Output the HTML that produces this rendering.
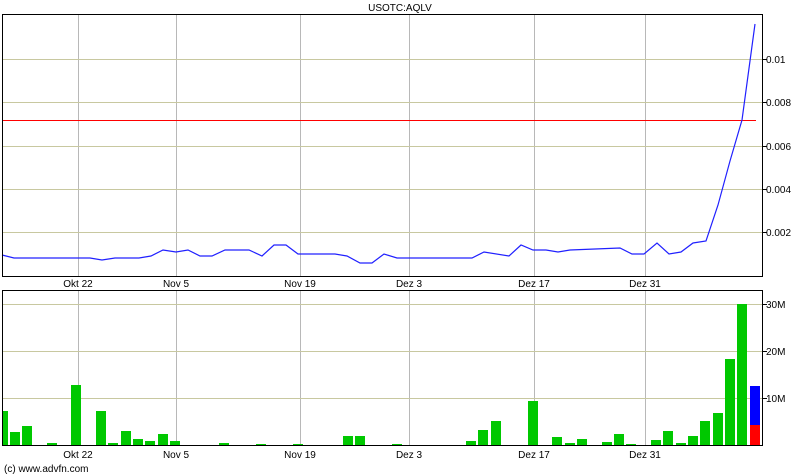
<!DOCTYPE html><html><head><style>body{margin:0;background:#fff}svg{display:block}text{font-family:"Liberation Sans",sans-serif;font-size:10px;fill:#000}</style></head><body>
<svg width="800" height="475" xmlns="http://www.w3.org/2000/svg">
<text x="400" y="11" text-anchor="middle">USOTC:AQLV</text>
<g stroke="#b8b8b8" stroke-width="1">
<line x1="78.5" y1="15" x2="78.5" y2="276"/><line x1="176.5" y1="15" x2="176.5" y2="276"/><line x1="300.5" y1="15" x2="300.5" y2="276"/><line x1="409.5" y1="15" x2="409.5" y2="276"/><line x1="534.5" y1="15" x2="534.5" y2="276"/><line x1="645.5" y1="15" x2="645.5" y2="276"/>
<line x1="78.5" y1="290" x2="78.5" y2="446"/><line x1="176.5" y1="290" x2="176.5" y2="446"/><line x1="300.5" y1="290" x2="300.5" y2="446"/><line x1="409.5" y1="290" x2="409.5" y2="446"/><line x1="534.5" y1="290" x2="534.5" y2="446"/><line x1="645.5" y1="290" x2="645.5" y2="446"/>
</g>
<g stroke="#c8c8a0" stroke-width="1">
<line x1="2" y1="59.5" x2="762" y2="59.5"/><line x1="2" y1="102.5" x2="762" y2="102.5"/><line x1="2" y1="146.5" x2="762" y2="146.5"/><line x1="2" y1="189.5" x2="762" y2="189.5"/><line x1="2" y1="232.5" x2="762" y2="232.5"/>
<line x1="2" y1="304.5" x2="762" y2="304.5"/><line x1="2" y1="351.5" x2="762" y2="351.5"/><line x1="2" y1="398.5" x2="762" y2="398.5"/>
</g>
<line x1="2" y1="120.5" x2="756" y2="120.5" stroke="#f00"/>
<polyline fill="none" stroke="#2020ff" stroke-width="1.2" points="2,255 14,258 90,258 102,260 115,258 139,258 151,256 163,250 176,252 188,250 200,256 212,256 225,250 249,250 262,256 274,245 286,245 298,254 335,254 347,256 360,263 372,263 384,254 397,258 472,258 484,252 509,256 521,245 533,250 546,250 558,252 570,250 620,248 632,254 644,254 657,243 669,254 681,252 693,243 706,241 718,205 730,161 742,120 755,24"/>
<rect x="2.5" y="14.5" width="760" height="262" fill="none" stroke="#000"/>
<rect x="2.5" y="290.5" width="760" height="155" fill="none" stroke="#000"/>
<g>
<line x1="763" y1="59.5" x2="767" y2="59.5" stroke="#000"/><line x1="763" y1="102.5" x2="767" y2="102.5" stroke="#000"/><line x1="763" y1="146.5" x2="767" y2="146.5" stroke="#000"/><line x1="763" y1="189.5" x2="767" y2="189.5" stroke="#000"/><line x1="763" y1="232.5" x2="767" y2="232.5" stroke="#000"/>
<line x1="763" y1="304.5" x2="767" y2="304.5" stroke="#000"/><line x1="763" y1="351.5" x2="767" y2="351.5" stroke="#000"/><line x1="763" y1="398.5" x2="767" y2="398.5" stroke="#000"/>
<text x="766" y="63">0.01</text><text x="766" y="106">0.008</text><text x="766" y="150">0.006</text><text x="766" y="193">0.004</text><text x="766" y="236">0.002</text>
<text x="766" y="308">30M</text><text x="766" y="355">20M</text><text x="766" y="402">10M</text>
</g>
<g text-anchor="middle">
<text x="78" y="287">Okt 22</text><text x="176" y="287">Nov 5</text><text x="300" y="287">Nov 19</text><text x="409" y="287">Dez 3</text><text x="534" y="287">Dez 17</text><text x="645" y="287">Dez 31</text>
<text x="78" y="458">Okt 22</text><text x="176" y="458">Nov 5</text><text x="300" y="458">Nov 19</text><text x="409" y="458">Dez 3</text><text x="534" y="458">Dez 17</text><text x="645" y="458">Dez 31</text>
</g>
<text x="4" y="472">(c) www.advfn.com</text>
<g fill="#00c800">
<rect x="3" y="411" width="5" height="34"/><rect x="10" y="432" width="10" height="13"/><rect x="22" y="426" width="10" height="19"/><rect x="47" y="443" width="10" height="2"/><rect x="71" y="385" width="10" height="60"/><rect x="96" y="411" width="10" height="34"/><rect x="108" y="443" width="10" height="2"/><rect x="121" y="431" width="10" height="14"/><rect x="133" y="439" width="10" height="6"/><rect x="145" y="441" width="10" height="4"/><rect x="158" y="434" width="10" height="11"/><rect x="170" y="441" width="10" height="4"/>
<rect x="219" y="443" width="10" height="2"/><rect x="256" y="444" width="10" height="1"/><rect x="293" y="444" width="10" height="1"/><rect x="343" y="436" width="10" height="9"/><rect x="355" y="436" width="10" height="9"/><rect x="392" y="444" width="10" height="1"/>
<rect x="466" y="441" width="10" height="4"/><rect x="478" y="430" width="10" height="15"/><rect x="491" y="421" width="10" height="24"/><rect x="528" y="401" width="10" height="44"/><rect x="552" y="437" width="10" height="8"/><rect x="565" y="443" width="10" height="2"/><rect x="577" y="439" width="10" height="6"/><rect x="602" y="442" width="10" height="3"/><rect x="614" y="434" width="10" height="11"/><rect x="626" y="444" width="10" height="1"/><rect x="651" y="440" width="10" height="5"/><rect x="663" y="431" width="10" height="14"/><rect x="676" y="443" width="10" height="2"/><rect x="688" y="436" width="10" height="9"/><rect x="700" y="421" width="10" height="24"/><rect x="713" y="413" width="10" height="32"/><rect x="725" y="359" width="10" height="86"/><rect x="737" y="304" width="10" height="141"/>
</g>
<rect x="750" y="386" width="10" height="39" fill="#0000ff"/><rect x="750" y="425" width="10" height="20" fill="#ff0000"/>
</svg></body></html>
